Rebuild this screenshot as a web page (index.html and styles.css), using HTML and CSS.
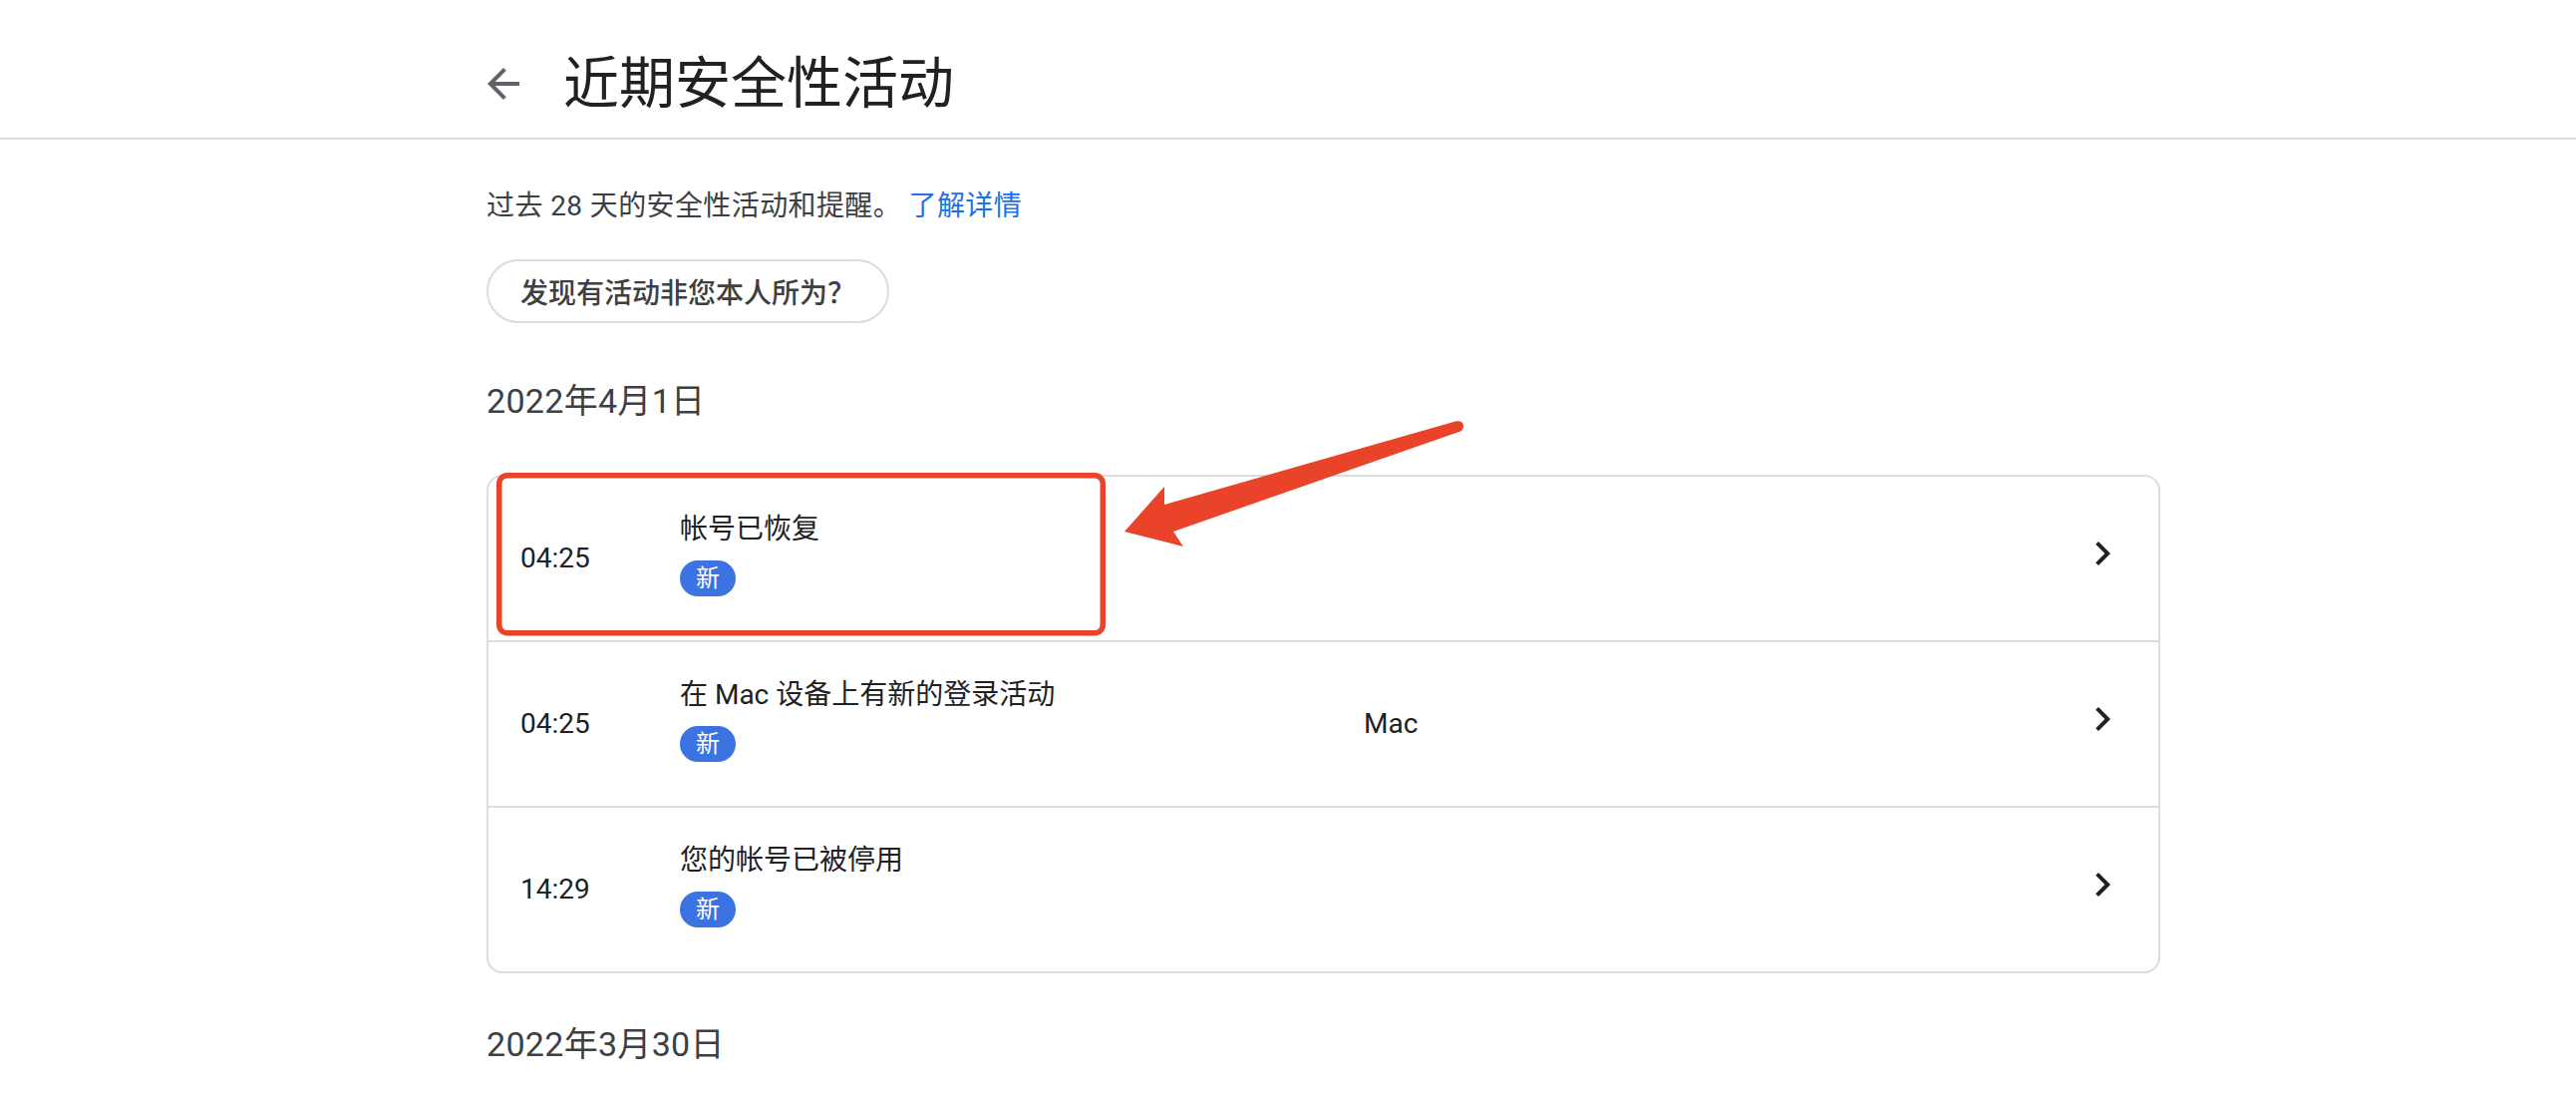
FILE: index.html
```html
<!DOCTYPE html>
<html lang="zh-CN">

<head>
    <meta charset="UTF-8">
    <meta name="viewport" content="width=device-width, initial-scale=1.0">
    <title>近期安全性活动</title>
    <link rel="stylesheet" href="styles.css">
</head>

<body>
    <header class="cabecera">
        <svg class="volver" viewBox="0 0 24 24" width="48" height="48">
            <path d="M20 11H7.83l5.59-5.59L12 4l-8 8 8 8 1.41-1.41L7.83 13H20v-2z" fill="#5f6368"/>
        </svg>
        <h1 class="titulo">近期安全性活动</h1>
    </header>

    <main class="contenido">
        <p class="resumen">过去 28 天的安全性活动和提醒。 <a href="#" class="enlace">了解详情</a></p>
        <button class="boton-ajeno">发现有活动非您本人所为？</button>

        <h2 class="fecha">2022年4月1日</h2>
        <div class="tarjeta">
            <div class="fila">
                <div class="hora">04:25</div>
                <div class="evento">
                    <div class="evento-titulo">帐号已恢复</div>
                    <span class="nuevo">新</span>
                </div>
                <div class="dispositivo"></div>
                <svg class="flecha" viewBox="0 0 24 24" width="48" height="48">
                    <path d="M10 6L8.59 7.41 13.17 12l-4.58 4.59L10 18l6-6z" fill="#202124"/>
                </svg>
            </div>
            <div class="fila">
                <div class="hora">04:25</div>
                <div class="evento">
                    <div class="evento-titulo">在 Mac 设备上有新的登录活动</div>
                    <span class="nuevo">新</span>
                </div>
                <div class="dispositivo">Mac</div>
                <svg class="flecha" viewBox="0 0 24 24" width="48" height="48">
                    <path d="M10 6L8.59 7.41 13.17 12l-4.58 4.59L10 18l6-6z" fill="#202124"/>
                </svg>
            </div>
            <div class="fila">
                <div class="hora">14:29</div>
                <div class="evento">
                    <div class="evento-titulo">您的帐号已被停用</div>
                    <span class="nuevo">新</span>
                </div>
                <div class="dispositivo"></div>
                <svg class="flecha" viewBox="0 0 24 24" width="48" height="48">
                    <path d="M10 6L8.59 7.41 13.17 12l-4.58 4.59L10 18l6-6z" fill="#202124"/>
                </svg>
            </div>
        </div>

        <h2 class="fecha fecha-siguiente">2022年3月30日</h2>
    </main>

    <!-- anotacion roja encima de la captura -->
    <svg class="anotacion" viewBox="0 0 2584 1096" width="2584" height="1096">
        <rect x="500.75" y="476.75" width="605.5" height="158" rx="8" fill="none" stroke="#e9432a" stroke-width="5.5"/>
        <path d="M1128 533L1168 488L1168 506L1460 422.5Q1467 421 1468 426.5Q1468 431 1465 432.5L1177 533L1187 548Z" fill="#e9432a"/>
    </svg>
</body>

</html>
```

FILE: styles.css
```css
body {
    margin: 0;
    background-color: #fff;
    font-family: Roboto, "Noto Sans CJK SC", sans-serif;
    color: #202124;
    position: relative;
    overflow: hidden;
    height: 1096px;
}

.cabecera {
    display: flex;
    align-items: center;
    padding: 52px 0 22px 481px;
    border-bottom: 2px solid #dadce0;
}

.volver {
    margin-right: 36px;
}

.titulo {
    margin: 0;
    font-size: 56px;
    line-height: 64px;
    font-weight: 400;
    color: #202124;
}

.contenido {
    margin-left: 488px;
    width: 1679px;
    padding-top: 47px;
}

.resumen {
    margin: 0;
    font-size: 28px;
    line-height: 40px;
    letter-spacing: 0.4px;
    color: #3c4043;
}

.enlace {
    color: #1a73e8;
    text-decoration: none;
}

.boton-ajeno {
    display: block;
    margin-top: 33px;
    height: 64px;
    padding: 0 32px;
    border: 2px solid #dadce0;
    border-radius: 32px;
    background-color: #fff;
    font-family: Roboto, "Noto Sans CJK SC", sans-serif;
    font-size: 28px;
    font-weight: 500;
    color: #3c4043;
    cursor: pointer;
}

.fecha {
    margin: 54px 0 0;
    font-size: 34px;
    line-height: 48px;
    font-weight: 400;
    letter-spacing: 0.3px;
    color: #3c4043;
}

.fecha-siguiente {
    margin-top: 47px;
}

.tarjeta {
    margin-top: 50px;
    border: 2px solid #dadce0;
    border-radius: 16px;
}

.fila {
    display: grid;
    grid-template-columns: 160px 686px 1fr 48px;
    align-items: center;
    height: 164px;
    padding: 0 32px;
}

.fila + .fila {
    border-top: 2px solid #dadce0;
}

.hora {
    font-size: 28px;
    line-height: 40px;
    color: #202124;
}

.evento {
    display: flex;
    flex-direction: column;
    align-items: flex-start;
    gap: 11px;
    padding-bottom: 12px;
}

.evento-titulo {
    font-size: 28px;
    line-height: 40px;
    color: #202124;
}

.nuevo {
    height: 36px;
    line-height: 36px;
    padding: 0 16px;
    border-radius: 18px;
    background-color: #3b74e2;
    color: #fff;
    font-size: 24px;
}

.dispositivo {
    font-size: 28px;
    line-height: 40px;
    color: #202124;
}

.flecha {
    margin-bottom: 10px;
}

.anotacion {
    position: absolute;
    top: 0;
    left: 0;
    pointer-events: none;
}
```
